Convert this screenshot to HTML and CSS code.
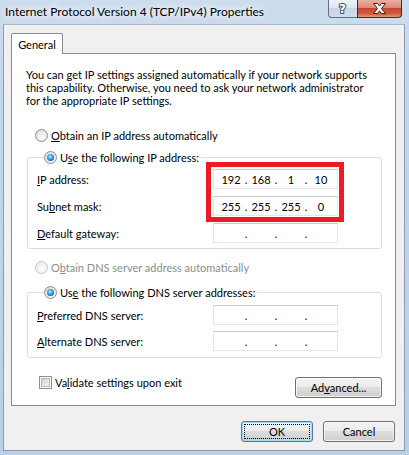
FILE: index.html
```html
<!DOCTYPE html>
<html>
<head>
<meta charset="utf-8">
<link rel="stylesheet" href="styles.css">
</head>
<body>
<div class="window">
  <div class="titlebar">
    <span class="title">Internet Protocol Version 4 (TCP/IPv4) Properties</span>
    <div class="caption-btns">
      <span class="cbtn help">
        <svg width="27" height="17" viewBox="0 0 27 17"><text x="13.5" y="13" text-anchor="middle" class="qmark">?</text></svg>
      </span>
      <span class="cbtn close">
        <svg width="43" height="17" viewBox="0 0 43 17"><path class="xmark" d="M15.5 3.5h4l2 2.6 2-2.6h4l-4 5 4 5h-4l-2-2.6-2 2.6h-4l4-5z"/></svg>
      </span>
    </div>
  </div>
  <div class="client">
    <div class="tabs"><div class="tab">General</div></div>
    <div class="panel">
      <p class="intro">You can get IP settings assigned automatically if your network supports<br>this capability. Otherwise, you need to ask your network administrator<br>for the appropriate IP settings.</p>
      <div class="opt first"><span class="radio"></span><span><u>O</u>btain an IP address automatically</span></div>
      <fieldset class="group g1">
        <legend><span class="opt-in"><span class="radio on"></span><span>U<u>s</u>e the following IP address:</span></span></legend>
        <div class="row"><span class="lbl"><u>I</u>P address:</span><div class="ip"><span class="seg">192</span><span class="dot">.</span><span class="seg">168</span><span class="dot">.</span><span class="seg">1</span><span class="dot">.</span><span class="seg">10</span></div></div>
        <div class="row"><span class="lbl">Su<u>b</u>net mask:</span><div class="ip"><span class="seg">255</span><span class="dot">.</span><span class="seg">255</span><span class="dot">.</span><span class="seg">255</span><span class="dot">.</span><span class="seg">0</span></div></div>
        <div class="row"><span class="lbl"><u>D</u>efault gateway:</span><div class="ip"><span class="seg"></span><span class="dot">.</span><span class="seg"></span><span class="dot">.</span><span class="seg"></span><span class="dot">.</span><span class="seg"></span></div></div>
      </fieldset>
      <div class="opt disabled"><span class="radio"></span><span>O<u>b</u>tain DNS server address automatically</span></div>
      <fieldset class="group g2">
        <legend><span class="opt-in"><span class="radio on"></span><span>Us<u>e</u> the following DNS server addresses:</span></span></legend>
        <div class="row"><span class="lbl"><u>P</u>referred DNS server:</span><div class="ip"><span class="seg"></span><span class="dot">.</span><span class="seg"></span><span class="dot">.</span><span class="seg"></span><span class="dot">.</span><span class="seg"></span></div></div>
        <div class="row"><span class="lbl"><u>A</u>lternate DNS server:</span><div class="ip"><span class="seg"></span><span class="dot">.</span><span class="seg"></span><span class="dot">.</span><span class="seg"></span><span class="dot">.</span><span class="seg"></span></div></div>
      </fieldset>
      <div class="bottom">
        <div class="checkrow"><span class="check"></span><span>Va<u>l</u>idate settings upon exit</span></div>
        <button class="btn adv">Ad<u>v</u>anced...</button>
      </div>
      <div class="highlight"></div>
    </div>
    <div class="actions">
      <button class="btn default">OK</button>
      <button class="btn">Cancel</button>
    </div>
  </div>
</div>
</body>
</html>
```
FILE: styles.css
```css
html, body {
  margin: 0;
  padding: 0;
}
body {
  font-family: Lato, "Open Sans", sans-serif;
  font-size: 11px;
  color: #000;
  background: #bcd3ea;
}
.window {
  width: 409px;
  height: 455px;
  display: flex;
  flex-direction: column;
  background: linear-gradient(180deg, #cddded 0%, #c2d6eb 20%, #b9d0ea 100%);
}
.titlebar {
  height: 24px;
  display: flex;
  align-items: flex-start;
  justify-content: space-between;
  flex: none;
}
.title {
  font-size: 12px;
  line-height: 24px;
  padding-left: 5px;
  color: #000;
  text-shadow: 0 0 6px #fff, 0 0 10px rgba(255,255,255,0.9), 0 0 14px rgba(255,255,255,0.7);
}
.caption-btns {
  display: flex;
  margin-right: 7px;
}
.cbtn {
  display: block;
  height: 18px;
  box-sizing: border-box;
  border: 1px solid #5f7089;
  border-top: none;
}
.cbtn svg { display: block; }
.help {
  width: 29px;
  border-right: none;
  border-radius: 0 0 0 4px;
  background: linear-gradient(180deg, #eef2f8 0%, #dde6f1 45%, #c7d5e6 50%, #cfdcec 100%);
}
.close {
  width: 45px;
  border-color: #5d2118;
  border-radius: 0 0 4px 0;
  background: linear-gradient(180deg, #eab0a3 0%, #dc8a78 45%, #c8462f 50%, #cf5a3c 80%, #e39a7f 100%);
}
.qmark {
  font-family: "DejaVu Sans", sans-serif;
  font-weight: bold;
  font-size: 12px;
  fill: #fff;
  stroke: #44536a;
  stroke-width: 2px;
  paint-order: stroke;
}
.xmark {
  fill: #fff;
  stroke: #4d1810;
  stroke-width: 1px;
  stroke-linejoin: round;
}
.client {
  flex: 1;
  margin: 0 4px 4px 3px;
  background: #f0f0f0;
  border: 1px solid #8a9bb1;
  border-top-color: #a9b8c9;
  display: flex;
  flex-direction: column;
}
.tabs {
  display: flex;
  padding: 8px 0 0 7px;
}
.tab {
  width: 52px;
  height: 21px;
  box-sizing: border-box;
  border: 1px solid #898c95;
  border-bottom: none;
  border-radius: 2px 2px 0 0;
  background: #fff;
  margin-bottom: -1px;
  position: relative;
  z-index: 1;
  text-align: center;
  line-height: 21px;
}
.panel {
  position: relative;
  margin: 0 8px 0 7px;
  border: 1px solid #898c95;
  background: #fff;
  padding: 14px 13px 7px 14px;
}
.intro {
  margin: 0;
  line-height: 13px;
}
.opt {
  display: flex;
  align-items: center;
  gap: 3px;
  height: 15px;
  margin-left: 9px;
}
.opt.first { margin-top: 21px; }
.opt.disabled { margin-top: 11px; color: #8d8d8d; }
.opt-in {
  display: flex;
  align-items: center;
  gap: 3px;
  height: 16px;
}
.radio {
  flex: none;
  width: 13px;
  height: 13px;
  box-sizing: border-box;
  border-radius: 50%;
  border: 1px solid #8c8e8f;
  background: radial-gradient(circle at 60% 65%, #fbfbfb 0%, #ececec 45%, #d2d2d2 100%);
  position: relative;
}
.radio.on::after {
  content: "";
  position: absolute;
  left: 2px;
  top: 2px;
  width: 7px;
  height: 7px;
  border-radius: 50%;
  background: radial-gradient(circle at 45% 40%, #c4f0ff 0%, #55b8ec 30%, #1c6aa8 70%, #0d3f70 100%);
}
.opt.disabled .radio {
  border-color: #c6c6c6;
  background: radial-gradient(circle at 60% 65%, #fbfbfb 0%, #f2f2f2 50%, #e6e6e6 100%);
}
.group {
  margin: 0 0 0 1px;
  border: 1px solid #d5dfe5;
  border-radius: 3px;
  min-width: 0;
}
.g1 { margin-top: 6px; padding: 0 0 5px 9px; }
.g2 { margin-top: 9px; padding: 0 0 6px 9px; }
.group legend {
  padding: 0 2px 0 0;
  margin-left: 7px;
}
.row {
  display: grid;
  grid-template-columns: 176px 125px;
  align-items: center;
  height: 20px;
}
.g1 .row { margin-top: 7px; }
.g1 .row:first-of-type { margin-top: 4px; }
.g2 .row { margin-top: 6px; }
.g2 .row:first-of-type { margin-top: 5px; }
.ip {
  height: 20px;
  box-sizing: border-box;
  border: 1px solid #e2e6ec;
  border-top-color: #c9cdd4;
  background: #fff;
  display: flex;
  align-items: center;
  padding-left: 4px;
}
.seg {
  width: 26px;
  text-align: center;
}
.dot {
  width: 4px;
  text-align: center;
}
.bottom {
  display: flex;
  justify-content: space-between;
  align-items: flex-start;
  margin-top: 19px;
}
.checkrow {
  display: flex;
  align-items: center;
  gap: 3px;
  height: 13px;
  margin: -1px 0 0 13px;
}
.check {
  flex: none;
  width: 13px;
  height: 13px;
  box-sizing: border-box;
  border: 1px solid #8e8f8f;
  background: linear-gradient(135deg, #c6cad0 0%, #e6e8eb 60%, #f7f7f7 100%);
  box-shadow: inset 0 0 0 1px #fff, inset 0 0 0 2px #b4b8be;
}
.btn {
  font: inherit;
  color: #000;
  height: 21px;
  box-sizing: border-box;
  border: 1px solid #707070;
  border-radius: 3px;
  background: linear-gradient(180deg, #f2f2f2 0%, #ebebeb 49%, #dddddd 50%, #cfcfcf 100%);
  box-shadow: inset 0 0 0 1px rgba(255,255,255,0.75);
  padding: 0;
  display: flex;
  align-items: center;
  justify-content: center;
  width: 72px;
}
.adv { width: 87px; }
.btn.default {
  border-color: #3c7fb1;
  box-shadow: inset 0 0 0 1px #9fdcf5;
  outline: 1px dotted #000;
  outline-offset: -4px;
}
.actions {
  display: flex;
  justify-content: flex-end;
  gap: 10px;
  margin-top: 15px;
  padding-right: 9px;
}
.highlight {
  position: absolute;
  left: 194px;
  top: 108px;
  width: 138px;
  height: 60px;
  box-sizing: border-box;
  border: 5px solid #ed1c24;
}
```
